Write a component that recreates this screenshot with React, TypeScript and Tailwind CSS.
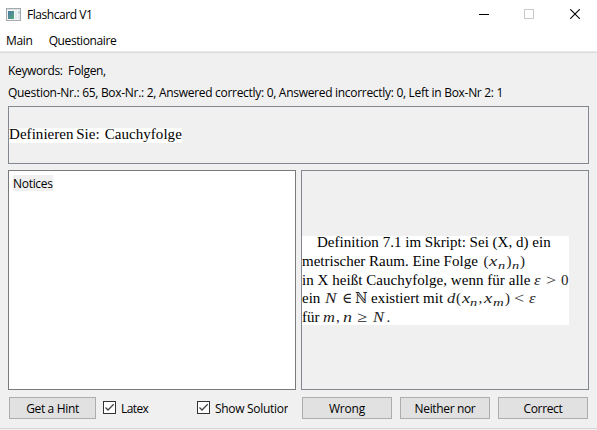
import type { ReactNode } from 'react';

function AppIcon() {
  return (
    <svg width="15" height="13" viewBox="0 0 15 13" shapeRendering="crispEdges">
      <defs>
        <linearGradient id="pane" x1="0" y1="0" x2="1" y2="1">
          <stop offset="0" stopColor="#4a77a8" />
          <stop offset="1" stopColor="#55a878" />
        </linearGradient>
      </defs>
      <rect x="0.5" y="0.5" width="14" height="12" fill="#f4f4f4" stroke="#a3a9ae" />
      <rect x="1" y="1" width="13" height="1" fill="#dfe2e5" />
      <rect x="2" y="3" width="6" height="8" fill="url(#pane)" />
      <rect x="9" y="3" width="2" height="8" fill="#e3e9ee" />
      <rect x="12" y="3" width="2" height="3" fill="#b9d5de" />
      <rect x="12" y="7" width="2" height="4" fill="#dfe5ea" />
    </svg>
  );
}

function WindowControls() {
  return (
    <div className="mb-px flex items-center">
      <svg width="10" height="10" className="mr-[35px]" shapeRendering="crispEdges">
        <rect x="0" y="5" width="10" height="1" fill="#000" />
      </svg>
      <svg width="10" height="10" className="mr-9" shapeRendering="crispEdges">
        <rect x="0.5" y="0.5" width="9" height="9" fill="none" stroke="#cacaca" />
      </svg>
      <svg width="10" height="10">
        <path d="M0.2 0.2 L9.8 9.8 M9.8 0.2 L0.2 9.8" stroke="#000" strokeWidth="1.1" fill="none" />
      </svg>
    </div>
  );
}

function Button({ children, className }: { children: ReactNode; className: string }) {
  return (
    <button className={`h-[22px] shrink-0 border border-[#adadad] bg-[#e1e1e1] leading-[22px] ${className}`}>
      {children}
    </button>
  );
}

function Checkbox({ children, className }: { children: ReactNode; className: string }) {
  return (
    <label className={`flex shrink-0 items-center overflow-hidden whitespace-nowrap ${className}`}>
      <svg width="13" height="13" className="mr-[5px] mb-px shrink-0">
        <rect x="0.5" y="0.5" width="12" height="12" fill="#fff" stroke="#333" />
        <path d="M2.5 6.5 L5 9 L10.7 3.3" fill="none" stroke="#444" strokeWidth="1.3" />
      </svg>
      <span className="pt-px">{children}</span>
    </label>
  );
}

/* One glyph of a formula; className sets its advance width and stretch. */
function G({ children, className }: { children: ReactNode; className: string }) {
  return <span className={`shrink-0 origin-left text-[#222] ${className}`}>{children}</span>;
}

function Sub({ children, className }: { children: ReactNode; className: string }) {
  return (
    <span className={`mt-[8px] shrink-0 origin-left text-[11px] leading-[11px] text-[#222] italic ${className}`}>
      {children}
    </span>
  );
}

export default function App() {
  return (
    <div className="flex h-[430px] w-[597px] flex-col overflow-hidden bg-[#f0f0f0] font-['Open_Sans','Noto_Sans',sans-serif] text-[12px] text-black">
      <header className="h-[51px] bg-white">
        <div className="flex h-[29px] items-center justify-between pr-[17px] pl-[6px]">
          <div className="flex items-center gap-[6px]">
            <AppIcon />
            <span className="pt-px tracking-[-0.45px]">Flashcard V1</span>
          </div>
          <WindowControls />
        </div>
        <nav className="flex h-[22px] items-center gap-4 pt-px pl-[6px]">
          <span className="tracking-[-0.3px]">Main</span>
          <span className="tracking-[-0.4px]">Questionaire</span>
        </nav>
      </header>
      <main className="flex h-[377px] flex-col border-t border-[#ebebeb] px-2 shadow-[inset_0_1px_0_#d9d9d9]">
        <p className="mt-[8px] h-[22px] leading-[22px] tracking-[-0.35px] whitespace-pre">Keywords:  Folgen,</p>
        <p className="h-[22px] leading-[22px] tracking-[-0.295px] whitespace-nowrap">
          Question-Nr.: 65, Box-Nr.: 2, Answered correctly: 0, Answered incorrectly: 0, Left in Box-Nr 2: 1
        </p>
        <section className="mt-[2px] flex h-[58px] w-[581px] items-center border border-[#828790] font-['Liberation_Serif',serif] text-[15px]">
          <span className="h-[15px] w-[173px] bg-white leading-[13px] tracking-[0.05px] whitespace-pre [word-spacing:-1.3px]">
            Definieren Sie:  Cauchyfolge
          </span>
        </section>
        <div className="mt-[6px] flex h-[220px] gap-[5px]">
          <section className="w-[288px] border border-[#7a7a7a] bg-white pt-1 pl-1">
            <span className="block h-4 w-10 bg-[#f0f0f0] leading-[18px] tracking-[-0.3px]">Notices</span>
          </section>
          <section className="flex w-[288px] items-center border border-[#828790] font-['Liberation_Serif','DejaVu_Serif',serif] text-[15px] leading-[18.7px] whitespace-pre">
            <div className="flex h-[89px] w-[267px] flex-col justify-center bg-white">
              <div className="h-[18.7px] pl-[15px] tracking-[0.02px]">Definition 7.1 im Skript: Sei (X, d) ein</div>
              <div className="flex h-[18.7px]">
                <span className="w-[181.5px]">metrischer Raum. Eine Folge</span>
                <G className="w-[5.5px]">(</G>
                <G className="w-[9px] scale-x-[1.25] italic">x</G>
                <Sub className="w-[8.5px] scale-x-[1.3]">n</Sub>
                <G className="w-[5px]">)</G>
                <Sub className="w-[8.5px] scale-x-[1.3]">n</Sub>
                <G className="w-[5px]">)</G>
              </div>
              <div className="flex h-[18.7px]">
                <span className="w-[232.5px] tracking-[0.04px]">in X heißt Cauchyfolge, wenn für alle</span>
                <G className="w-[12px] scale-x-[1.1] italic">ε</G>
                <G className="w-[15px] scale-x-[1.2]">&gt;</G>
                <G className="w-[8px]">0</G>
              </div>
              <div className="flex h-[18.7px]">
                <span className="w-[22.5px]">ein</span>
                <G className="w-[17px] scale-x-[1.15] italic">N</G>
                <G className="w-[13.5px] scale-x-[0.9]">∈</G>
                <G className="w-[16px] scale-x-[0.9]">ℕ</G>
                <span className="w-[76px]">existiert mit</span>
                <G className="w-[9px] scale-x-[1.1] italic">d</G>
                <G className="w-[5.5px]">(</G>
                <G className="w-[8.5px] scale-x-[1.25] italic">x</G>
                <Sub className="w-[8.5px] scale-x-[1.3]">n</Sub>
                <G className="w-[5.5px]">,</G>
                <G className="w-[9px] scale-x-[1.25] italic">x</G>
                <Sub className="w-[12px] scale-x-[1.35]">m</Sub>
                <G className="w-[9px]">)</G>
                <G className="w-[15px] scale-x-[1.2]">&lt;</G>
                <G className="w-[8px] scale-x-[1.1] italic">ε</G>
              </div>
              <div className="flex h-[18.7px]">
                <span className="w-[20.5px]">für</span>
                <G className="w-[13.5px] scale-x-[1.1] italic">m</G>
                <G className="w-[6.5px]">,</G>
                <G className="w-[14.5px] scale-x-[1.2] italic">n</G>
                <G className="w-[15.5px] scale-x-[1.2]">≥</G>
                <G className="w-[14px] scale-x-[1.1] italic">N</G>
                <G className="w-[4px]">.</G>
              </div>
            </div>
          </section>
        </div>
        <div className="mt-[7px] flex h-[22px] items-center pl-px">
          <Button className="w-[87px] tracking-[-0.35px]">Get a Hint</Button>
          <Checkbox className="ml-[7px] w-[80px] tracking-[-0.6px]">Latex</Checkbox>
          <Checkbox className="ml-[14px] w-[91px] tracking-[-0.3px]">Show Solution</Checkbox>
          <Button className="ml-[14px] w-[90px] tracking-[-0.2px]">Wrong</Button>
          <Button className="ml-2 w-[90px] tracking-[-0.35px]">Neither nor</Button>
          <Button className="ml-2 w-[90px] tracking-[-0.35px]">Correct</Button>
        </div>
      </main>
      <footer className="h-[2px] border-t border-[#d7d7d7]" />
    </div>
  );
}
